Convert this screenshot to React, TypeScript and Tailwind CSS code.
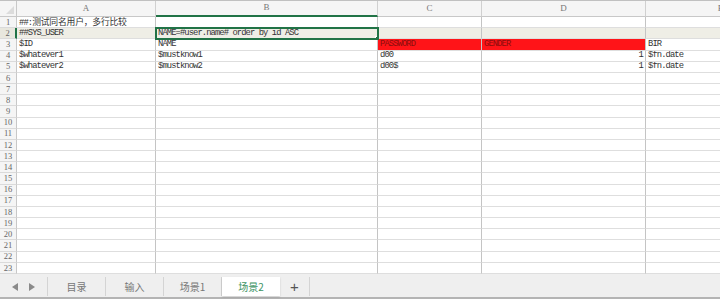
import React from "react";

const cols = [139, 222, 104, 164, 150];
const letters = ["A", "B", "C", "D", "E"];

type Cell = { text?: string; red?: boolean; right?: boolean };

const data: Record<number, Cell[]> = {
  1: [{ text: "##:测试同名用户，多行比较" }],
  2: [{ text: "##SYS_USER" }, { text: "NAME=#user.name# order by id ASC" }],
  3: [{ text: "$ID" }, { text: "NAME" }, { text: "PASSWORD", red: true }, { text: "GENDER", red: true }, { text: "BIR" }],
  4: [{ text: "$whatever1" }, { text: "$mustknow1" }, { text: "d00" }, { text: "1", right: true }, { text: "$fn.date" }],
  5: [{ text: "$whatever2" }, { text: "$mustknow2" }, { text: "d00$" }, { text: "1", right: true }, { text: "$fn.date" }],
};

const mono = "font-['Liberation_Mono','Noto_Sans_CJK_SC',monospace]";

// latin glyphs squeezed to half-width like SimSun, cjk left full width
const CellText = ({ text }: { text: string }) => {
  const parts = text.split(/([\u3000-\u9fff\uff00-\uffef]+)/);
  return (
    <span className={`${mono} text-[8.8px] whitespace-nowrap text-[#333]`}>
      {parts.map((p, i) =>
        /[\u3000-\u9fff\uff00-\uffef]/.test(p) ? (
          <span key={i} className="tracking-[-0.2px] font-['Noto_Sans_CJK_SC',sans-serif]">
            {p}
          </span>
        ) : (
          <span key={i} className="tracking-[-0.9px]">
            {p}
          </span>
        )
      )}
    </span>
  );
};

const Row = ({ n }: { n: number }) => {
  const cells = data[n] || [];
  const sel = n === 2;
  return (
    <div className={`flex flex-1 min-h-0 ${sel ? "bg-[#efeee6]" : "bg-white"}`}>
      <div
        className={`w-[17px] shrink-0 flex items-center justify-center border-b border-[#dadada] text-[8.5px] text-[#666] font-['Liberation_Serif',serif] ${
          sel ? "bg-[#e8e7de] border-r-2 border-r-[#217346]" : "bg-[#f5f5f5] border-r border-r-[#c8c8c8]"
        }`}
      >
        {n}
      </div>
      {cols.map((w, i) => {
        const c = cells[i];
        const isSel = sel && i === 1;
        return (
          <div
            key={i}
            style={{ width: w }}
            className={`relative shrink-0 flex items-center px-[2px] border-b border-[#dedede] border-r border-r-[#c4c4c4] ${
              c?.right ? "justify-end" : ""
            } ${c?.red ? "bg-[#ff1418]" : ""} ${isSel ? "outline-2 outline-[#217346] -outline-offset-1 z-10" : ""} ${
              i === 0 ? "overflow-visible" : "overflow-hidden"
            }`}
          >
            {c?.text &&
              (c.red ? (
                <span className={`${mono} text-[8.8px] tracking-[-0.9px] text-[#8a0d0d]`}>{c.text}</span>
              ) : (
                <CellText text={c.text} />
              ))}
            {isSel && <div className="absolute right-[-3px] bottom-[-3px] w-[5px] h-[5px] bg-[#217346] border border-white" />}
          </div>
        );
      })}
    </div>
  );
};

const Tab = ({ label, active }: { label: string; active?: boolean }) => (
  <div
    className={`h-full w-[58px] flex items-center justify-center text-[10px] font-['Noto_Sans_CJK_SC',sans-serif] ${
      active ? "bg-white text-[#3d9463] shadow-[0_1px_2px_rgba(0,0,0,0.15)]" : "text-[#777] border-r border-[#d4d4d4]"
    }`}
  >
    {label}
  </div>
);

export default function App() {
  return (
    <div className="w-[720px] h-[299px] overflow-hidden bg-white flex flex-col border-t border-[#c0c0c0]">
      {/* column headers */}
      <div className="h-[16px] flex shrink-0 bg-[#f5f5f5]">
        <div className="relative w-[17px] shrink-0 border-r border-b border-[#c8c8c8]">
          <div className="absolute right-[2px] bottom-[2px] w-0 h-0 border-l-[8px] border-l-transparent border-b-[8px] border-b-[#dcdcdc]" />
        </div>
        {cols.map((w, i) => (
          <div
            key={i}
            style={{ width: w }}
            className={`shrink-0 flex items-center justify-center text-[9px] text-[#777] font-['Liberation_Serif',serif] border-r border-[#d0d0d0] ${
              i === 1 ? "border-b-2 border-b-[#217346]" : "border-b border-b-[#c8c8c8]"
            }`}
          >
            {letters[i]}
          </div>
        ))}
      </div>

      {/* grid */}
      <div className="h-[257px] flex flex-col shrink-0">
        {Array.from({ length: 23 }, (_, i) => (
          <Row key={i} n={i + 1} />
        ))}
      </div>

      {/* sheet tabs */}
      <div className="flex-1 flex items-stretch bg-[#efefef] border-b-2 border-[#b4b4b4] pt-[3px] pb-[1px]">
        <div className="w-[48px] flex items-center justify-center gap-[11px] border-r border-[#d4d4d4]">
          <svg width="6" height="8" viewBox="0 0 6 8">
            <polygon points="6,0 6,8 0,4" fill="#8a8a8a" />
          </svg>
          <svg width="6" height="8" viewBox="0 0 6 8">
            <polygon points="0,0 0,8 6,4" fill="#8a8a8a" />
          </svg>
        </div>
        <Tab label="目录" />
        <Tab label="输入" />
        <Tab label="场景1" />
        <Tab label="场景2" active />
        <div className="w-[30px] flex items-center justify-center text-[15px] leading-none text-[#555] border-r border-[#d4d4d4] font-['Liberation_Sans',sans-serif]">
          +
        </div>
      </div>
    </div>
  );
}
